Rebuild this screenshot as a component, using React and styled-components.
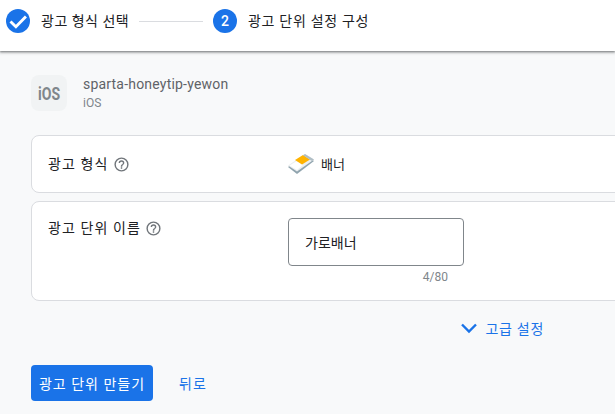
import React from "react";
import styled, { createGlobalStyle } from "styled-components";

const Global = createGlobalStyle`
    html, body {
        margin: 0;
        padding: 0;
        height: 100%;
        overflow: hidden;
        background: #f8f9fa;
    }
    body {
        font-family: Roboto, "Noto Sans CJK KR", sans-serif;
        color: #202124;
    }
`;

const Page = styled.div`
    width: 615px;
    height: 414px;
    overflow: hidden;
    background: #f8f9fa;
`;

const Stepper = styled.header`
    height: 51px;
    box-sizing: border-box;
    padding: 0 0 9px 6px;
    display: flex;
    align-items: center;
    background: #fff;
    box-shadow: 0 1px 2px rgba(60, 64, 67, 0.6), 0 1px 3px 1px rgba(60, 64, 67, 0.2);
`;

const StepCircle = styled.span`
    width: 24px;
    height: 24px;
    border-radius: 50%;
    background: #1a73e8;
    color: #fff;
    font-size: 14px;
    font-weight: 500;
    display: flex;
    align-items: center;
    justify-content: center;
    margin-right: 11px;
    flex: none;
`;

const StepLabel = styled.span`
    width: ${(props) => props.$width}px;
    font-size: 14px;
    letter-spacing: ${(props) => props.$spacing}px;
    line-height: 20px;
    white-space: nowrap;
    flex: none;
`;

const StepLine = styled.span`
    width: 64px;
    height: 1px;
    background: #dadce0;
    margin: 0 10px;
    flex: none;
`;

const Content = styled.main`
    padding: 24px 0 0 31px;
    width: 640px;
    box-sizing: border-box;
`;

const AppRow = styled.div`
    display: flex;
    align-items: center;
    gap: 16px;
    height: 36px;
    margin-bottom: 24px;
`;

const AppIcon = styled.div`
    width: 36px;
    height: 36px;
    border-radius: 8px;
    background: #f1f3f4;
    color: #80868b;
    font-size: 18px;
    font-weight: 700;
    display: flex;
    align-items: center;
    justify-content: center;

    span {
        transform: scaleX(0.78);
    }
`;

const AppText = styled.div`
    display: flex;
    flex-direction: column;
    gap: 1px;
`;

const AppName = styled.span`
    font-size: 14px;
    line-height: 19px;
    letter-spacing: 0.2px;
    color: #5f6368;
`;

const AppPlatform = styled.span`
    font-size: 12px;
    line-height: 17px;
    color: #80868b;
`;

const Card = styled.section`
    background: #fff;
    border: 1px solid #dadce0;
    border-radius: 8px;
    box-sizing: border-box;
    height: ${(props) => props.$height}px;
    margin-bottom: 8px;
    padding: ${(props) => props.$top}px 0 0 16px;
    display: flex;
    align-items: flex-start;
`;

const FieldLabel = styled.div`
    width: 240px;
    flex: none;
    display: flex;
    align-items: center;
    gap: 4px;
    font-size: 14px;
    line-height: 20px;
    letter-spacing: 1.1px;
`;

const HelpIcon = styled.svg`
    width: 17px;
    height: 17px;
    flex: none;
`;

const BannerValue = styled.div`
    display: flex;
    align-items: center;
    gap: 7px;
    font-size: 13px;
    line-height: 22px;
`;

const InputColumn = styled.div`
    width: 176px;
    display: flex;
    flex-direction: column;
`;

const TextBox = styled.div`
    height: 48px;
    box-sizing: border-box;
    border: 1px solid #80868b;
    border-radius: 4px;
    padding: 0 16px;
    display: flex;
    align-items: center;
    font-size: 14px;
`;

const Counter = styled.div`
    font-size: 12px;
    line-height: 16px;
    color: #80868b;
    text-align: right;
    padding: 3px 16px 0 0;
`;

const AdvancedRow = styled.div`
    width: 513px;
    display: flex;
    justify-content: flex-end;
    align-items: center;
    gap: 8px;
    margin-top: 17px;
    height: 20px;
    color: #1a73e8;
    font-size: 14px;
    letter-spacing: 0.7px;
`;

const Actions = styled.div`
    display: flex;
    align-items: center;
    margin-top: 27px;
`;

const PrimaryButton = styled.button`
    width: 122px;
    height: 36px;
    border: 0;
    padding: 0;
    border-radius: 4px;
    background: #1a73e8;
    color: #fff;
    font: inherit;
    font-size: 14px;
    letter-spacing: 1px;
`;

const TextButton = styled.button`
    border: 0;
    background: none;
    padding: 0;
    margin-left: 26px;
    color: #1a73e8;
    font: inherit;
    font-size: 14px;
    letter-spacing: 1px;
`;

const Help = () => (
    <HelpIcon viewBox="0 0 24 24" fill="#70757a">
        <path d="M12 2a10 10 0 1 0 0 20 10 10 0 0 0 0-20zm0 18a8 8 0 1 1 0-16 8 8 0 0 1 0 16zm-1-4h2v2h-2v-2zm1-10a4 4 0 0 0-4 4h2a2 2 0 1 1 4 0c0 2-3 1.75-3 5h2c0-2.25 3-2.5 3-5a4 4 0 0 0-4-4z" />
    </HelpIcon>
);

const BannerIcon = () => (
    <svg width="26" height="22" viewBox="0 0 26 22">
        <path d="M0 13 L17 1 L26 7 L9 20 Z" fill="#90a4ae" />
        <path d="M0 11.5 L17 0 L26 5.5 L9 17.5 Z" fill="#eceff1" />
        <path d="M1.5 11.5 L9 7 L15 11 L9 16 Z" fill="#fff" />
        <path d="M7 6 L15 1 L22 5.5 L14 10.5 Z" fill="#ffb300" />
        <path d="M17 0 L26 5.5 L24 7 L15 1.2 Z" fill="#b0bec5" />
    </svg>
);

const App = () => {
    return (
        <Page>
            <Global />
            <Stepper>
                <StepCircle>
                    <svg width="20" height="20" viewBox="0 0 24 24" fill="none" stroke="#fff" strokeWidth="3.4">
                        <path d="M3 12.5 L9.5 19 L21.5 6.5" />
                    </svg>
                </StepCircle>
                <StepLabel $width={88} $spacing={0.5}>광고 형식 선택</StepLabel>
                <StepLine />
                <StepCircle>2</StepCircle>
                <StepLabel $width={120} $spacing={0.7}>광고 단위 설정 구성</StepLabel>
            </Stepper>
            <Content>
                <AppRow>
                    <AppIcon><span>iOS</span></AppIcon>
                    <AppText>
                        <AppName>sparta-honeytip-yewon</AppName>
                        <AppPlatform>iOS</AppPlatform>
                    </AppText>
                </AppRow>
                <Card $height={58} $top={18}>
                    <FieldLabel>
                        광고 형식 <Help />
                    </FieldLabel>
                    <BannerValue>
                        <BannerIcon />
                        배너
                    </BannerValue>
                </Card>
                <Card $height={100} $top={16}>
                    <FieldLabel>
                        광고 단위 이름 <Help />
                    </FieldLabel>
                    <InputColumn>
                        <TextBox>가로배너</TextBox>
                        <Counter>4/80</Counter>
                    </InputColumn>
                </Card>
                <AdvancedRow>
                    <svg width="18" height="12" viewBox="0 0 18 12" fill="none" stroke="#1a73e8" strokeWidth="2.4">
                        <path d="M2 2.5 L9 9.5 L16 2.5" />
                    </svg>
                    고급 설정
                </AdvancedRow>
                <Actions>
                    <PrimaryButton>광고 단위 만들기</PrimaryButton>
                    <TextButton>뒤로</TextButton>
                </Actions>
            </Content>
        </Page>
    );
};

export default App;
